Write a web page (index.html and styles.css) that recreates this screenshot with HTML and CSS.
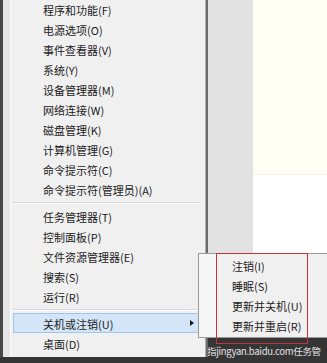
FILE: index.html
```html
<!DOCTYPE html>
<html lang="zh-CN">
<head>
  <meta charset="UTF-8">
  <title>Win+X 菜单</title>
  <link rel="stylesheet" href="styles.css">
</head>
<body>
  <div class="screen">
    <div class="desktop">
      <div class="side"></div>
      <div class="window">
        <div class="cream"></div>
        <div class="blank"></div>
      </div>
    </div>
    <div class="taskbar">
      <span class="task-text">指jingyan.baidu.com任务管</span>
    </div>

    <ul class="menu">
      <li class="item">程序和功能(F)</li>
      <li class="item">电源选项(O)</li>
      <li class="item">事件查看器(V)</li>
      <li class="item">系统(Y)</li>
      <li class="item">设备管理器(M)</li>
      <li class="item">网络连接(W)</li>
      <li class="item">磁盘管理(K)</li>
      <li class="item">计算机管理(G)</li>
      <li class="item">命令提示符(C)</li>
      <li class="item">命令提示符(管理员)(A)</li>
      <li class="sep"></li>
      <li class="item">任务管理器(T)</li>
      <li class="item">控制面板(P)</li>
      <li class="item">文件资源管理器(E)</li>
      <li class="item">搜索(S)</li>
      <li class="item">运行(R)</li>
      <li class="sep"></li>
      <li class="item active">关机或注销(U)<span class="arrow"></span></li>
      <li class="item">桌面(D)</li>
    </ul>

    <ul class="submenu">
      <li class="item">注销(I)</li>
      <li class="item">睡眠(S)</li>
      <li class="item">更新并关机(U)</li>
      <li class="item">更新并重启(R)</li>
      <li class="mark"></li>
    </ul>
  </div>
</body>
</html>
```

FILE: styles.css
```css
* {
  margin: 0;
  padding: 0;
  box-sizing: border-box;
}
body {
  width: 327px;
  height: 363px;
  overflow: hidden;
  font-family: "Noto Sans CJK SC", "Liberation Sans", sans-serif;
  font-size: 11px;
  color: #1b1b1b;
}
.screen {
  position: relative;
  width: 327px;
  height: 363px;
  display: grid;
  grid-template-rows: 1fr 25px;
  background: #3c3c3c;
}
.desktop {
  display: flex;
}
.side {
  width: 253px;
  background: #e2e2e2;
}
.window {
  flex: 1;
  display: flex;
  flex-direction: column;
}
.cream {
  height: 175px;
  background: #fefef4;
  border-bottom: 1px solid #f1f1e6;
}
.blank {
  flex: 1;
  background: #ffffff;
}
.taskbar {
  background: #353535;
  padding-left: 207px;
  display: flex;
  align-items: center;
  overflow: hidden;
}
.task-text {
  color: #e4e4e4;
  font-size: 9.5px;
  letter-spacing: -0.3px;
  white-space: nowrap;
}

/* main menu */
.menu {
  position: absolute;
  left: 0;
  top: -1px;
  width: 206px;
  height: 358px;
  list-style: none;
  border-left: 3px solid #474747;
  border-right: 1px solid #b0b0b0;
  box-shadow: 2px 0 0 #6a6a6a;
  background: linear-gradient(to right, #e6e6e6 0 7px, #fbfbfb 7px 8px, #f0f0f0 8px);
}
.item {
  position: relative;
  height: 20px;
  line-height: 20px;
  margin: 0 6px 0 10px;
  padding-left: 29px;
  border: 1px solid transparent;
  white-space: nowrap;
}
.active {
  background: #d3e5f7;
  border-color: #9ec6ee;
}
.arrow {
  position: absolute;
  right: 4px;
  top: 6px;
  border-left: 4px solid #1b1b1b;
  border-top: 3.5px solid transparent;
  border-bottom: 3.5px solid transparent;
}
.sep {
  height: 7px;
  margin: 0 4px 0 9px;
  background: linear-gradient(#f0f0f0 0 3px, #d9d9d9 3px 4px, #fdfdfd 4px 5px, #f0f0f0 5px);
}

/* submenu */
.submenu {
  position: absolute;
  left: 198px;
  top: 253px;
  width: 129px;
  height: 85px;
  list-style: none;
  padding-top: 1px;
  border: 1px solid #9a9a9a;
  border-right: none;
  background: linear-gradient(to right, #f6f6f6 0 17px, #f0f0f0 17px);
}
.submenu .item {
  margin: 0;
  padding-left: 32px;
}
.mark {
  position: absolute;
  left: 17px;
  top: -1px;
  width: 92px;
  height: 91px;
  border: 1px solid #c0323c;
}
```
